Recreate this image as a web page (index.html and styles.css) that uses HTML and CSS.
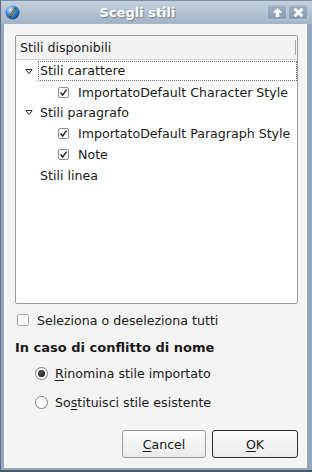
FILE: index.html
```html
<!DOCTYPE html>
<html lang="it">
<head>
  <meta charset="UTF-8" />
  <title>Scegli stili</title>
  <link rel="stylesheet" href="styles.css">
</head>
<body>
  <div class="window">

    <!-- Titolo -->
    <div class="titlebar">
      <svg class="app-icon" width="15" height="15" viewBox="0 0 15 15">
        <defs>
          <radialGradient id="globe" cx="0.35" cy="0.3" r="0.8">
            <stop offset="0" stop-color="#d6ecff" />
            <stop offset="0.45" stop-color="#3d8fd6" />
            <stop offset="1" stop-color="#0f3f7a" />
          </radialGradient>
        </defs>
        <circle cx="7.5" cy="7.5" r="7" fill="url(#globe)" />
        <path d="M4.5 12 L10.5 3" stroke="#2b2b2b" stroke-width="1.6" />
        <path d="M5 11.3 L10.2 3.6" stroke="#f0b53a" stroke-width="0.9" />
      </svg>
      <span class="title">Scegli stili</span>
      <div class="title-buttons">
        <span class="tbtn">
          <svg width="11" height="11" viewBox="0 0 10 10"><path d="M5 0.8 L9.4 5.2 H6.6 V9.2 H3.4 V5.2 H0.6 Z" fill="#fff" /></svg>
        </span>
        <span class="tbtn">
          <svg width="11" height="11" viewBox="0 0 10 10"><path d="M1.5 1.5 L8.5 8.5 M8.5 1.5 L1.5 8.5" stroke="#fff" stroke-width="2.6" /></svg>
        </span>
      </div>
    </div>

    <div class="content">

      <!-- Albero degli stili -->
      <div class="tree">
        <div class="tree-header"><span>Stili disponibili</span></div>
        <div class="tree-body">
          <div class="row group focused">
            <span class="arrow"></span>
            <span class="label">Stili carattere</span>
          </div>
          <div class="row child">
            <span class="check checked"></span>
            <span class="label">ImportatoDefault Character Style</span>
          </div>
          <div class="row group">
            <span class="arrow"></span>
            <span class="label">Stili paragrafo</span>
          </div>
          <div class="row child">
            <span class="check checked"></span>
            <span class="label">ImportatoDefault Paragraph Style</span>
          </div>
          <div class="row child">
            <span class="check checked"></span>
            <span class="label">Note</span>
          </div>
          <div class="row group">
            <span class="arrow empty"></span>
            <span class="label">Stili linea</span>
          </div>
        </div>
      </div>

      <div class="select-all">
        <span class="check"></span>
        <span>Seleziona o deseleziona tutti</span>
      </div>

      <div class="section-title">In caso di conflitto di nome</div>

      <div class="radios">
        <div class="radio-row">
          <span class="radio on"></span>
          <span><u>R</u>inomina stile importato</span>
        </div>
        <div class="radio-row">
          <span class="radio"></span>
          <span>So<u>s</u>tituisci stile esistente</span>
        </div>
      </div>

      <div class="buttons">
        <button type="button" class="btn"><u>C</u>ancel</button>
        <button type="button" class="btn default"><u>O</u>K</button>
      </div>

    </div>
  </div>
</body>
</html>
```

FILE: styles.css
```css
body {
  margin: 0;
  padding: 0;
  font-family: "DejaVu Sans", sans-serif;
  font-size: 12.6px;
  color: #1a1a1a;
  background-color: #f4f4f4;
}
.window {
  width: 312px;
  height: 472px;
  box-sizing: border-box;
  display: flex;
  flex-direction: column;
  background-color: #93a6bc;
  border-left: 1px solid #5d6f85;
  border-bottom: 2px solid #4a5a6c;
}
.titlebar {
  height: 24px;
  flex: none;
  display: flex;
  align-items: center;
  background: linear-gradient(#c4d0dd, #a3b4c7);
  border-top: 1px solid #7d90a6;
  box-sizing: border-box;
}
.app-icon {
  margin-left: 4px;
  flex: none;
}
.title {
  flex: 1;
  text-align: center;
  font-weight: bold;
  font-size: 13px;
  color: #ffffff;
  text-shadow: 1px 1px 1px #6c7e93;
  margin-right: 12px;
}
.title-buttons {
  display: flex;
  gap: 1px;
  margin-right: 4px;
  flex: none;
}
.tbtn {
  width: 20px;
  height: 15px;
  flex: none;
  display: flex;
  align-items: center;
  justify-content: center;
  background: linear-gradient(#9eafc3, #8a9cb2);
  border: 1px solid #b6c3d2;
  border-radius: 2px;
  box-sizing: border-box;
}
.content {
  flex: 1;
  margin: 0 5px 2px 3px;
  background-color: #f4f4f4;
  padding: 11px 9px 0 11px;
  display: flex;
  flex-direction: column;
}

/* Albero */
.tree {
  height: 269px;
  box-sizing: border-box;
  border: 1px solid #9c9c9c;
  border-radius: 2px;
  background-color: #ffffff;
  flex: none;
}
.tree-header {
  height: 24px;
  box-sizing: border-box;
  background-color: #f3f3f3;
  border-bottom: 1px solid #d4d4d4;
  display: flex;
  align-items: center;
  padding: 0 1px 0 4px;
}
.tree-header span {
  flex: 1;
  height: 15px;
  line-height: 15px;
  border-right: 1px solid #a8a8a8;
}
.tree-body {
  padding-top: 1px;
}
.row {
  height: 20.8px;
  display: flex;
  align-items: center;
  box-sizing: border-box;
}
.row.group {
  padding-left: 9px;
}
.row.child {
  padding-left: 42px;
}
.row.focused .label {
  flex: 1;
  outline: 1px dotted #7a7a7a;
  height: 18px;
  line-height: 18px;
  margin-right: 1px;
  padding-left: 1px;
  margin-left: -1px;
}
.arrow {
  width: 8px;
  height: 7px;
  flex: none;
  margin-right: 7px;
  background: url("data:image/svg+xml,%3Csvg xmlns='http://www.w3.org/2000/svg' width='8' height='7'%3E%3Cpath d='M0.8 1.5 H7.2 L4 5.8 Z' fill='none' stroke='%23333' stroke-width='1'/%3E%3C/svg%3E") no-repeat;
}
.arrow.empty {
  background: none;
}
.check {
  width: 11px;
  height: 11px;
  box-sizing: border-box;
  border: 1px solid #8e8e8e;
  border-radius: 2px;
  background-color: #ffffff;
  margin-right: 9px;
  flex: none;
}
.check.checked {
  background: #ffffff url("data:image/svg+xml,%3Csvg xmlns='http://www.w3.org/2000/svg' width='9' height='9'%3E%3Cpath d='M1.5 4.5 L3.6 7 L7.6 1.6' fill='none' stroke='%23222' stroke-width='1.4'/%3E%3C/svg%3E") no-repeat center;
}

/* Opzioni */
.select-all {
  height: 20px;
  margin-top: 6px;
  display: flex;
  align-items: center;
  padding-left: 2px;
}
.select-all .check {
  width: 12px;
  height: 12px;
  border-color: #a6a6a6;
  margin-right: 8px;
}
.section-title {
  height: 20px;
  line-height: 20px;
  margin-top: 8px;
  font-weight: bold;
  font-size: 13px;
}
.radios {
  display: flex;
  flex-direction: column;
  gap: 9px;
  margin-top: 5px;
  padding-left: 20px;
}
.radio-row {
  height: 20px;
  display: flex;
  align-items: center;
}
.radio {
  width: 13px;
  height: 13px;
  box-sizing: border-box;
  border: 1px solid #7e7e7e;
  border-radius: 50%;
  background-color: #ffffff;
  margin-right: 7px;
  display: flex;
  align-items: center;
  justify-content: center;
}
.radio.on::after {
  content: "";
  width: 7px;
  height: 7px;
  border-radius: 50%;
  background: radial-gradient(circle at 40% 40%, #555, #111);
}
u {
  text-decoration-thickness: 1px;
  text-underline-offset: 2px;
}

/* Pulsanti */
.buttons {
  display: flex;
  justify-content: flex-end;
  gap: 6px;
  margin-top: 18px;
}
button.btn {
  font-family: "DejaVu Sans", sans-serif;
  font-size: 12.6px;
  color: #1a1a1a;
  width: 84px;
  height: 28px;
  border: 1px solid #9a9a9a;
  border-radius: 3px;
  background: linear-gradient(#fbfbfb, #ebebeb);
  padding: 0;
}
button.btn.default {
  width: 86px;
  border-color: #2e2e2e;
}
```
